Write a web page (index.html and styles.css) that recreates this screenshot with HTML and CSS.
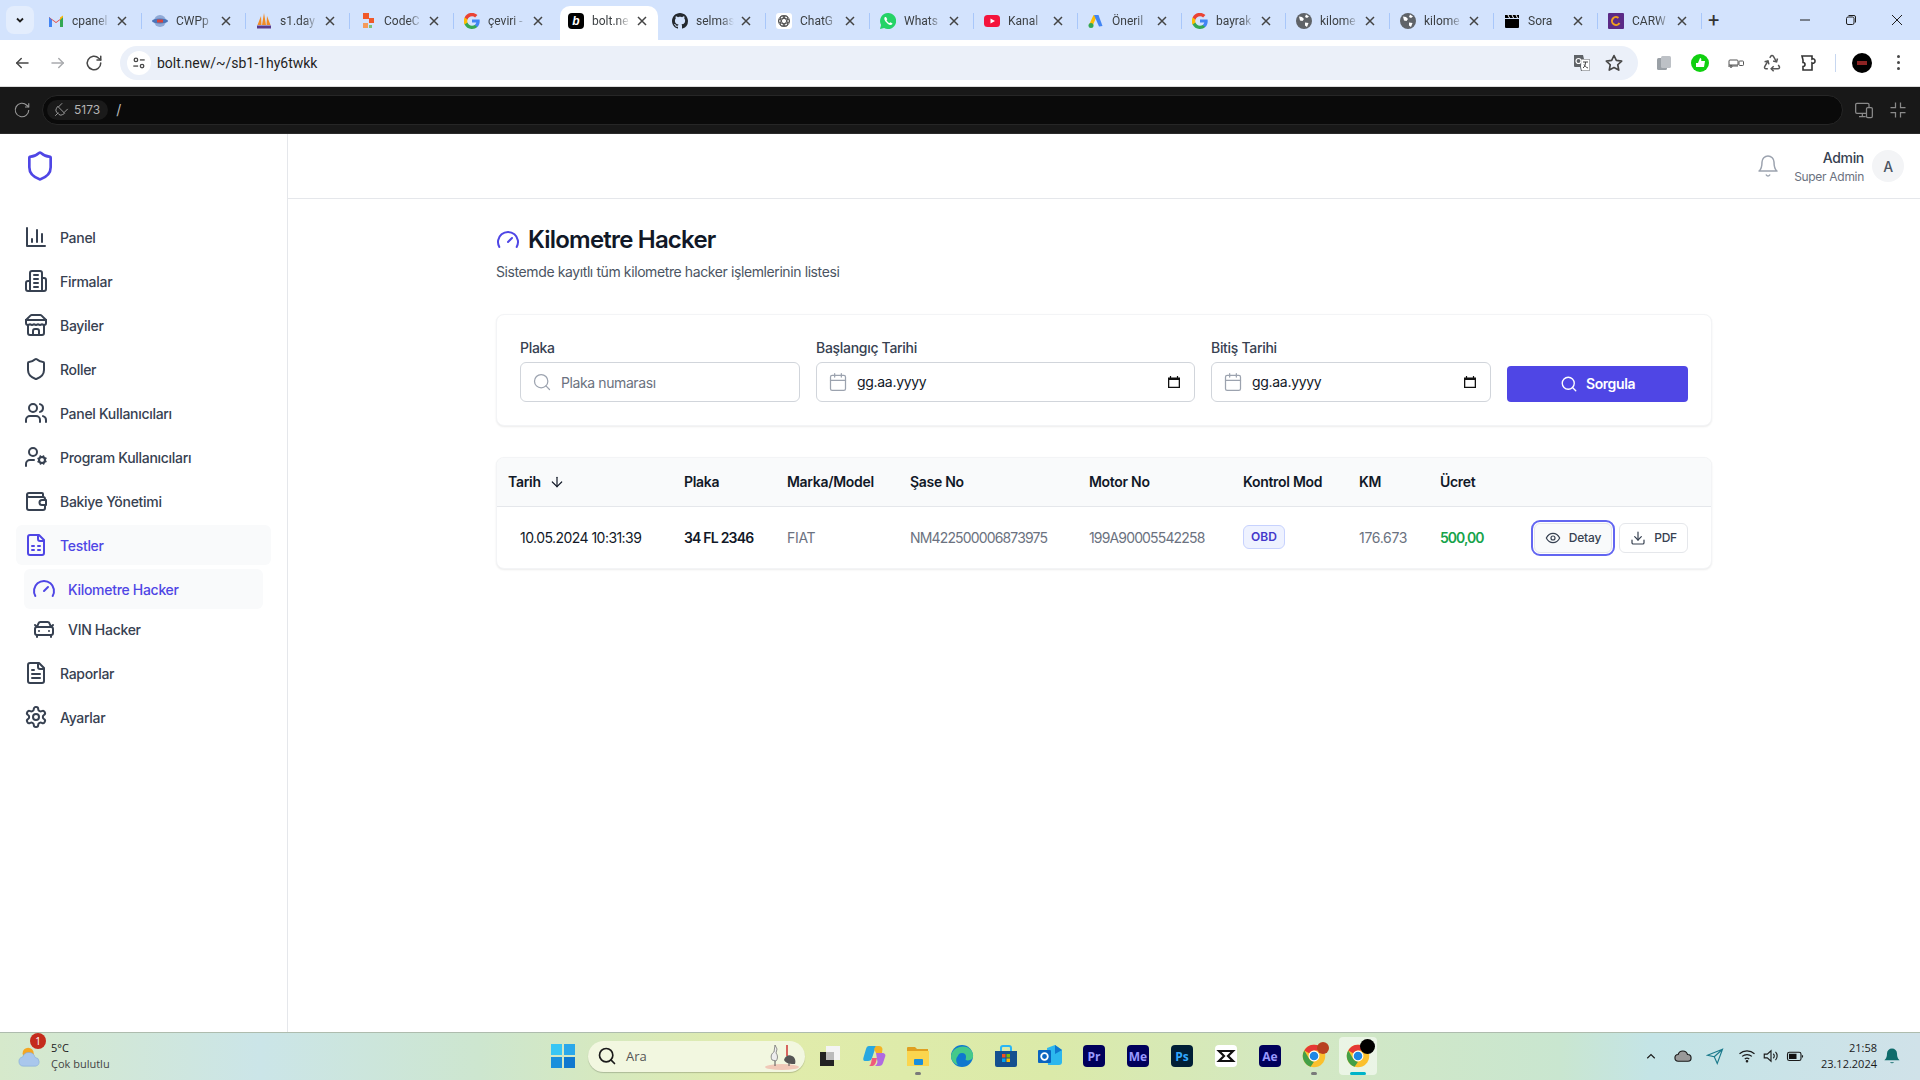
FILE: index.html
```html
<!DOCTYPE html>
<html lang="tr">
<head>
    <meta charset="UTF-8">
    <meta name="viewport" content="width=device-width, initial-scale=1.0">
    <title>Kilometre Hacker</title>
    <link rel="stylesheet" href="styles.css">
</head>
<body>
    <!-- icon sprite -->
    <svg class="sprite" xmlns="http://www.w3.org/2000/svg">
        <symbol id="i-chart" viewBox="0 0 24 24"><path d="M3 3v18h18"/><path d="M18 17V9"/><path d="M13 17V5"/><path d="M8 17v-3"/></symbol>
        <symbol id="i-building" viewBox="0 0 24 24"><path d="M6 22V4a2 2 0 0 1 2-2h8a2 2 0 0 1 2 2v18Z"/><path d="M6 12H4a2 2 0 0 0-2 2v6a2 2 0 0 0 2 2h2"/><path d="M18 9h2a2 2 0 0 1 2 2v9a2 2 0 0 1-2 2h-2"/><path d="M10 6h4"/><path d="M10 10h4"/><path d="M10 14h4"/><path d="M10 18h4"/></symbol>
        <symbol id="i-store" viewBox="0 0 24 24"><path d="m2 7 4.41-4.41A2 2 0 0 1 7.83 2h8.34a2 2 0 0 1 1.42.59L22 7"/><path d="M4 12v8a2 2 0 0 0 2 2h12a2 2 0 0 0 2-2v-8"/><path d="M15 22v-4a2 2 0 0 0-2-2h-2a2 2 0 0 0-2 2v4"/><path d="M2 7h20"/><path d="M22 7v3a2 2 0 0 1-2 2a2.7 2.7 0 0 1-1.59-.63.7.7 0 0 0-.82 0A2.7 2.7 0 0 1 16 12a2.7 2.7 0 0 1-1.59-.63.7.7 0 0 0-.82 0A2.7 2.7 0 0 1 12 12a2.7 2.7 0 0 1-1.59-.63.7.7 0 0 0-.82 0A2.7 2.7 0 0 1 8 12a2.7 2.7 0 0 1-1.59-.63.7.7 0 0 0-.82 0A2.7 2.7 0 0 1 4 12a2 2 0 0 1-2-2V7"/></symbol>
        <symbol id="i-shield" viewBox="0 0 24 24"><path d="M20 13c0 5-3.5 7.5-7.66 8.95a1 1 0 0 1-.67-.01C7.5 20.5 4 18 4 13V6a1 1 0 0 1 1-1c2 0 4.5-1.2 6.24-2.72a1.17 1.17 0 0 1 1.52 0C14.51 3.81 17 5 19 5a1 1 0 0 1 1 1z"/></symbol>
        <symbol id="i-users" viewBox="0 0 24 24"><path d="M16 21v-2a4 4 0 0 0-4-4H6a4 4 0 0 0-4 4v2"/><circle cx="9" cy="7" r="4"/><path d="M22 21v-2a4 4 0 0 0-3-3.87"/><path d="M16 3.13a4 4 0 0 1 0 7.75"/></symbol>
        <symbol id="i-usercog" viewBox="0 0 24 24"><circle cx="18" cy="15" r="3"/><circle cx="9" cy="7" r="4"/><path d="M10 15H6a4 4 0 0 0-4 4v2"/><path d="m21.7 16.4-.9-.3"/><path d="m15.2 13.9-.9-.3"/><path d="m16.6 18.7.3-.9"/><path d="m19.1 12.2.3-.9"/><path d="m19.6 18.7-.4-1"/><path d="m16.8 12.3-.4-1"/><path d="m14.3 16.6 1-.4"/><path d="m20.7 13.8 1-.4"/></symbol>
        <symbol id="i-wallet" viewBox="0 0 24 24"><path d="M19 8V5a1 1 0 0 0-1-1H5a2 2 0 0 0-2 2v13a2 2 0 0 0 2 2h14a2 2 0 0 0 2-2v-3"/><path d="M3 6a2 2 0 0 0 2 2h14a2 2 0 0 1 2 2v1"/><path d="M22 11h-4a2 2 0 0 0 0 5h4z"/></symbol>
        <symbol id="i-sheet" viewBox="0 0 24 24"><path d="M15 2H6a2 2 0 0 0-2 2v16a2 2 0 0 0 2 2h12a2 2 0 0 0 2-2V7Z"/><path d="M14 2v4a2 2 0 0 0 2 2h4"/><path d="M8 13h2"/><path d="M14 13h2"/><path d="M8 17h2"/><path d="M14 17h2"/></symbol>
        <symbol id="i-gauge" viewBox="0 0 24 24"><path d="m12 14 4-4"/><path d="M3.34 19a10 10 0 1 1 17.32 0"/></symbol>
        <symbol id="i-car" viewBox="0 0 24 24"><path d="m21 8-2 2-1.5-3.7A2 2 0 0 0 15.646 5H8.4a2 2 0 0 0-1.903 1.257L5 10 3 8"/><path d="M7 14h.01"/><path d="M17 14h.01"/><rect width="18" height="8" x="3" y="10" rx="2"/><path d="M5 18v2"/><path d="M19 18v2"/></symbol>
        <symbol id="i-file" viewBox="0 0 24 24"><path d="M15 2H6a2 2 0 0 0-2 2v16a2 2 0 0 0 2 2h12a2 2 0 0 0 2-2V7Z"/><path d="M14 2v4a2 2 0 0 0 2 2h4"/><path d="M10 9H8"/><path d="M16 13H8"/><path d="M16 17H8"/></symbol>
        <symbol id="i-gear" viewBox="0 0 24 24"><path d="M12.22 2h-.44a2 2 0 0 0-2 2v.18a2 2 0 0 1-1 1.73l-.43.25a2 2 0 0 1-2 0l-.15-.08a2 2 0 0 0-2.73.73l-.22.38a2 2 0 0 0 .73 2.73l.15.1a2 2 0 0 1 1 1.72v.51a2 2 0 0 1-1 1.74l-.15.09a2 2 0 0 0-.73 2.73l.22.38a2 2 0 0 0 2.73.73l.15-.08a2 2 0 0 1 2 0l.43.25a2 2 0 0 1 1 1.73V20a2 2 0 0 0 2 2h.44a2 2 0 0 0 2-2v-.18a2 2 0 0 1 1-1.73l.43-.25a2 2 0 0 1 2 0l.15.08a2 2 0 0 0 2.73-.73l.22-.39a2 2 0 0 0-.73-2.73l-.15-.08a2 2 0 0 1-1-1.74v-.5a2 2 0 0 1 1-1.74l.15-.09a2 2 0 0 0 .73-2.73l-.22-.38a2 2 0 0 0-2.73-.73l-.15.08a2 2 0 0 1-2 0l-.43-.25a2 2 0 0 1-1-1.73V4a2 2 0 0 0-2-2z"/><circle cx="12" cy="12" r="3"/></symbol>
        <symbol id="i-bell" viewBox="0 0 24 24"><path d="M6 8a6 6 0 0 1 12 0c0 7 3 9 3 9H3s3-2 3-9"/><path d="M10.3 21a1.94 1.94 0 0 0 3.4 0"/></symbol>
        <symbol id="i-search" viewBox="0 0 24 24"><circle cx="11" cy="11" r="8"/><path d="m21 21-4.3-4.3"/></symbol>
        <symbol id="i-calendar" viewBox="0 0 24 24"><path d="M8 2v4"/><path d="M16 2v4"/><rect width="18" height="18" x="3" y="4" rx="2"/><path d="M3 10h18"/></symbol>
        <symbol id="i-arrow" viewBox="0 0 24 24"><path d="M12 5v14"/><path d="m19 12-7 7-7-7"/></symbol>
        <symbol id="i-eye" viewBox="0 0 24 24"><path d="M2 12s3.5-7 10-7 10 7 10 7-3.5 7-10 7-10-7-10-7Z"/><circle cx="12" cy="12" r="3"/></symbol>
        <symbol id="i-download" viewBox="0 0 24 24"><path d="M21 15v4a2 2 0 0 1-2 2H5a2 2 0 0 1-2-2v-4"/><path d="m7 10 5 5 5-5"/><path d="M12 15V3"/></symbol>
        <symbol id="i-reload" viewBox="0 0 24 24"><path d="M21 12a9 9 0 1 1-2.64-6.36L21 8"/><path d="M21 3v5h-5"/></symbol>
        <symbol id="i-close" viewBox="0 0 10 10"><path d="M1 1l8 8M9 1 1 9"/></symbol>
        <symbol id="f-globe" viewBox="0 0 16 16"><circle cx="8" cy="8" r="8" fill="#5f6368"/><path d="M3 3.5l3 .5 2 2-1.5 2L4 7.5zM9 9.5l3.500.5-1.500 4-2-1.500zM10 1.500l3 2-2 1.500-2-1z" fill="#fff"/></symbol>
        <symbol id="f-google" viewBox="0 0 16 16"><path d="M15.700 8.200c0-.6-.05-1.100-.15-1.600H8v3h4.300a3.700 3.700 0 0 1-1.600 2.400v2h2.600c1.500-1.400 2.400-3.400 2.400-5.800z" fill="#4285f4"/><path d="M8 16c2.200 0 4-.7 5.300-2l-2.600-2c-.7.5-1.600.8-2.700.8-2.100 0-3.900-1.400-4.500-3.300H.6v2.100A8 8 0 0 0 8 16z" fill="#34a853"/><path d="M3.500 9.500a4.800 4.800 0 0 1 0-3V4.400H.6a8 8 0 0 0 0 7.200z" fill="#fbbc05"/><path d="M8 3.200c1.200 0 2.300.4 3.100 1.200l2.300-2.300A8 8 0 0 0 .6 4.400l2.900 2.100C4.100 4.600 5.900 3.200 8 3.200z" fill="#ea4335"/></symbol>
        <symbol id="f-chrome" viewBox="0 0 32 32"><circle cx="16" cy="16" r="15" fill="#fbc02d"/><path d="M16 1a15 15 0 0 1 13 7.500H16a7.500 7.500 0 0 0-6.500 3.750L3 8.500A15 15 0 0 1 16 1z" fill="#e53935"/><path d="M3 8.500l6.500 11.250A7.500 7.500 0 0 0 16 23.500l-4.500 6.800A15 15 0 0 1 3 8.500z" fill="#43a047"/><circle cx="16" cy="16" r="6.500" fill="#1e88e5" stroke="#fff" stroke-width="1.500"/></symbol>
    </svg>

    <!-- browser tabs -->
    <div class="tabstrip">
        <button class="tab-menu"><svg viewBox="0 0 12 12"><path d="M3 4.500 6 7.500 9 4.500"/></svg></button>
        <div class="tab"><svg class="favicon" viewBox="0 0 16 16"><path d="M1 14V4l7 5 7-5v10h-3V7L8 10 4 7v7z" fill="#ea4335"/><path d="M1 14h3V7L1 4z" fill="#4285f4"/><path d="M12 14h3V4l-3 3z" fill="#34a853"/><path d="M12 7l3-3V2.500L12 4.500z" fill="#fbbc05"/></svg><span class="tab-title">cpanel</span><svg class="tab-close"><use href="#i-close"/></svg></div>
        <div class="tab"><svg class="favicon" viewBox="0 0 16 16"><circle cx="8" cy="8" r="6" fill="#8fa9d6"/><ellipse cx="8" cy="8" rx="8" ry="2.500" fill="#4a74b8"/><rect x="5" y="6.500" width="6" height="3" fill="#d8443c"/></svg><span class="tab-title">CWPp</span><svg class="tab-close"><use href="#i-close"/></svg></div>
        <div class="tab"><svg class="favicon" viewBox="0 0 16 16"><path d="M8 0 10 12H6zM5 3 5.500 12H1.500zM11 3 14.500 12H10.500z" fill="#f08a24"/><rect x="1" y="12.500" width="14" height="3" fill="#5a3a8a"/></svg><span class="tab-title">s1.day</span><svg class="tab-close"><use href="#i-close"/></svg></div>
        <div class="tab"><svg class="favicon" viewBox="0 0 16 16"><rect x="3" y="0" width="6" height="6" fill="#f0592a"/><rect x="9" y="5" width="5" height="5" fill="#f0592a"/><rect x="3" y="10" width="5" height="5" fill="#f59a5a"/><rect x="9" y="12" width="3" height="3" fill="#7cc576"/></svg><span class="tab-title">CodeC</span><svg class="tab-close"><use href="#i-close"/></svg></div>
        <div class="tab"><svg class="favicon"><use href="#f-google"/></svg><span class="tab-title">çeviri -</span><svg class="tab-close"><use href="#i-close"/></svg></div>
        <div class="tab tab-active"><span class="favicon bolt-icon">b</span><span class="tab-title">bolt.ne</span><svg class="tab-close"><use href="#i-close"/></svg></div>
        <div class="tab"><svg class="favicon" viewBox="0 0 16 16"><path fill="#24292f" d="M8 0C3.580 0 0 3.580 0 8c0 3.540 2.290 6.530 5.470 7.590.4.070.55-.17.55-.38 0-.19-.01-.82-.01-1.490-2.010.37-2.530-.49-2.690-.94-.09-.23-.48-.94-.82-1.130-.28-.15-.68-.52-.01-.53.63-.01 1.080.58 1.230.82.72 1.210 1.870.87 2.330.66.070-.52.28-.87.51-1.070-1.780-.2-3.640-.89-3.640-3.950 0-.87.31-1.590.82-2.150-.08-.2-.36-1.020.08-2.120 0 0 .67-.21 2.200.82.64-.18 1.320-.27 2-.27s1.360.09 2 .27c1.530-1.040 2.200-.82 2.200-.82.44 1.100.16 1.920.08 2.120.51.56.82 1.270.82 2.150 0 3.070-1.870 3.750-3.650 3.950.29.25.54.73.54 1.480 0 1.070-.01 1.930-.01 2.200 0 .21.15.46.55.38A8.010 8.010 0 0 0 16 8c0-4.420-3.580-8-8-8z"/></svg><span class="tab-title">selmas</span><svg class="tab-close"><use href="#i-close"/></svg></div>
        <div class="tab"><svg class="favicon" viewBox="0 0 16 16"><rect width="16" height="16" rx="3" fill="#fff"/><g fill="none" stroke="#555" stroke-width="1"><circle cx="8" cy="8" r="5.500"/><ellipse cx="8" cy="8" rx="5.500" ry="2.500" transform="rotate(60 8 8)"/><ellipse cx="8" cy="8" rx="5.500" ry="2.500" transform="rotate(-60 8 8)"/><ellipse cx="8" cy="8" rx="5.500" ry="2.500"/></g></svg><span class="tab-title">ChatG</span><svg class="tab-close"><use href="#i-close"/></svg></div>
        <div class="tab"><svg class="favicon" viewBox="0 0 16 16"><path d="M8 0a8 8 0 0 0-6.900 12L0 16l4.100-1.100A8 8 0 1 0 8 0z" fill="#25d366"/><path d="M5 4c-1 1-1 2.500.5 4.500S9 11.800 10.500 12c1 .1 2-.8 2-1.500l-2-1.200-1 .8C8.500 9.800 7 8.300 6.500 7.300l.8-1L6 4z" fill="#fff"/></svg><span class="tab-title">Whats</span><svg class="tab-close"><use href="#i-close"/></svg></div>
        <div class="tab"><svg class="favicon" viewBox="0 0 16 16"><rect y="2" width="16" height="12" rx="3.500" fill="#f4143c"/><path d="M6.500 5.500v5L11 8z" fill="#fff"/></svg><span class="tab-title">Kanal</span><svg class="tab-close"><use href="#i-close"/></svg></div>
        <div class="tab"><svg class="favicon" viewBox="0 0 16 16"><path d="M5.500 2 1 12l3 2 4.500-10z" fill="#fbbc05"/><path d="M10.500 2H6l5 11.500 3.500-.5z" fill="#4285f4"/><circle cx="3" cy="12.500" r="2.500" fill="#34a853"/></svg><span class="tab-title">Öneril</span><svg class="tab-close"><use href="#i-close"/></svg></div>
        <div class="tab"><svg class="favicon"><use href="#f-google"/></svg><span class="tab-title">bayrak</span><svg class="tab-close"><use href="#i-close"/></svg></div>
        <div class="tab"><svg class="favicon"><use href="#f-globe"/></svg><span class="tab-title">kilome</span><svg class="tab-close"><use href="#i-close"/></svg></div>
        <div class="tab"><svg class="favicon"><use href="#f-globe"/></svg><span class="tab-title">kilome</span><svg class="tab-close"><use href="#i-close"/></svg></div>
        <div class="tab"><svg class="favicon" viewBox="0 0 16 16"><path d="M1 6h14v8a1 1 0 0 1-1 1H2a1 1 0 0 1-1-1z"/><path d="M1 2h14v3H1z"/><path d="M4 2 5.500 5M8 2 9.500 5M12 2 13.500 5" stroke="#fff" stroke-width="1"/></svg><span class="tab-title">Sora</span><svg class="tab-close"><use href="#i-close"/></svg></div>
        <div class="tab"><svg class="favicon" viewBox="0 0 16 16"><rect width="16" height="16" rx="1" fill="#5b2a86"/><circle cx="8" cy="8" r="4" fill="none" stroke="#f0a020" stroke-width="2" stroke-dasharray="19 6" transform="rotate(30 8 8)"/></svg><span class="tab-title">CARW</span><svg class="tab-close"><use href="#i-close"/></svg></div>
        <span class="tab-new">+</span>
        <div class="win-controls">
            <svg viewBox="0 0 12 12"><path d="M1 6h10"/></svg>
            <svg viewBox="0 0 12 12"><rect x="1.500" y="3" width="7.500" height="7.500" rx="1.500"/><path d="M3.500 1.500H9A1.500 1.500 0 0 1 10.500 3v5.500"/></svg>
            <svg viewBox="0 0 12 12"><path d="M1 1l10 10M11 1 1 11"/></svg>
        </div>
    </div>

    <!-- browser toolbar -->
    <div class="toolbar">
        <button class="tool-btn"><svg viewBox="0 0 24 24"><path d="M20 12H5"/><path d="m11 6-6 6 6 6"/></svg></button>
        <button class="tool-btn tool-off"><svg viewBox="0 0 24 24"><path d="M4 12h15"/><path d="m13 6 6 6-6 6"/></svg></button>
        <button class="tool-btn"><svg viewBox="0 0 24 24"><use href="#i-reload"/></svg></button>
        <div class="address">
            <span class="site-chip"><svg viewBox="0 0 16 16"><circle cx="4.500" cy="4.500" r="2"/><path d="M9 4.500h5.500"/><circle cx="11.500" cy="11.500" r="2"/><path d="M1.500 11.500H7"/></svg></span>
            <span class="address-text">bolt.new/~/sb1-1hy6twkk</span>
            <svg class="translate-icon" viewBox="0 0 20 20"><path d="M2 2h9l1 4h5a1 1 0 0 1 1 1v10a1 1 0 0 1-1 1H9l-1-4H3a1 1 0 0 1-1-1z" fill="#5f6368"/><path d="M9.500 6.500H17.500V17.500H9.800L9 14z" fill="#fff"/><path d="M11 9h5M13.500 9c0 3-1 5-2.500 6M12 11.500c.8 1.500 2.200 3 4 3.500" fill="none" stroke="#444" stroke-width="1"/><circle cx="6.500" cy="8" r="2.500" fill="none" stroke="#fff" stroke-width="1.200"/></svg>
            <svg class="star-icon" viewBox="0 0 24 24"><path d="M12 3l2.800 5.900 6.400.8-4.700 4.400 1.200 6.400L12 17.400l-5.700 3.100 1.200-6.400L2.800 9.700l6.400-.8z"/></svg>
        </div>
        <div class="extensions">
            <span class="ext"><svg viewBox="0 0 20 20"><rect x="3" y="5" width="10" height="12" rx="1.500" fill="#9aa0a6"/><rect x="7" y="3" width="10" height="12" rx="1.500" fill="#bdc1c6"/></svg></span>
            <span class="ext"><svg viewBox="0 0 20 20"><circle cx="10" cy="10" r="9" fill="#10d010"/><path d="M6 10h2l2-5c1.500 0 1.500 1.500 1.200 3H15l-1 6H6z" fill="#fff"/></svg></span>
            <span class="ext"><svg viewBox="0 0 20 20" class="ext-line ext-thin"><path d="M3 12V8a1 1 0 0 1 1-1h7a1 1 0 0 1 1 1v4H3z"/><rect x="13" y="8" width="4.500" height="4.500" rx=".8"/><path d="M2 13h10"/><circle cx="5" cy="13.500" r="1"/></svg></span>
            <span class="ext"><svg viewBox="0 0 24 24" class="ext-line"><path d="M7 19H4.815a1.830 1.830 0 0 1-1.570-.881 1.785 1.785 0 0 1-.004-1.784L7.196 9.500"/><path d="M11 19h8.203a1.830 1.830 0 0 0 1.556-.89 1.784 1.784 0 0 0 0-1.775l-1.226-2.120"/><path d="m14 16-3 3 3 3"/><path d="M8.293 13.596 7.196 9.500 3.100 10.598"/><path d="m9.344 5.811 1.093-1.892A1.830 1.830 0 0 1 11.985 3a1.784 1.784 0 0 1 1.546.888l3.943 6.843"/><path d="m13.378 9.633 4.096 1.098 1.097-4.096"/></svg></span>
            <span class="ext"><svg viewBox="0 0 20 20" class="ext-dark"><path d="M3 3h10v3a2 2 0 0 1 3 2 2 2 0 0 1-3 2v7H4v-3.500a2 2 0 0 0 0-4V7z"/></svg></span>
            <span class="tool-sep"></span>
            <span class="profile"><span class="profile-logo"></span></span>
            <span class="dots"><i></i><i></i><i></i></span>
        </div>
    </div>

    <!-- bolt preview bar -->
    <div class="devbar">
        <svg class="dev-reload" viewBox="0 0 24 24"><use href="#i-reload"/></svg>
        <div class="dev-field">
            <span class="port"><svg viewBox="0 0 24 24"><path d="M2 22l5-5"/><path d="M9 9l6-6" transform="translate(-2 -1)"/><path d="M15 15l6-6" transform="translate(1 2)"/><path d="M6 7l11 11-3 2a5 5 0 0 1-6 0l-4-4a5 5 0 0 1 0-6z"/></svg>5173</span>
            <span class="dev-path">/</span>
        </div>
        <svg class="dev-icon" viewBox="0 0 24 24"><rect x="2" y="4" width="16" height="12" rx="1.500"/><path d="M6 20h8M10 16v4"/><rect x="15" y="9" width="7" height="12" rx="1.500" fill="#181818"/></svg>
        <svg class="dev-icon" viewBox="0 0 24 24"><path d="M9 3v6H3"/><path d="M15 3v6h6"/><path d="M9 21v-6H3"/><path d="M15 21v-6h6"/></svg>
    </div>

    <!-- app -->
    <div class="app">
        <aside class="sidebar">
            <div class="logo"><svg class="logo-icon icon"><use href="#i-shield"/></svg></div>
            <nav class="nav">
                <a class="nav-item"><svg class="icon"><use href="#i-chart"/></svg>Panel</a>
                <a class="nav-item"><svg class="icon"><use href="#i-building"/></svg>Firmalar</a>
                <a class="nav-item"><svg class="icon"><use href="#i-store"/></svg>Bayiler</a>
                <a class="nav-item"><svg class="icon"><use href="#i-shield"/></svg>Roller</a>
                <a class="nav-item"><svg class="icon"><use href="#i-users"/></svg>Panel Kullanıcıları</a>
                <a class="nav-item"><svg class="icon"><use href="#i-usercog"/></svg>Program Kullanıcıları</a>
                <a class="nav-item"><svg class="icon"><use href="#i-wallet"/></svg>Bakiye Yönetimi</a>
                <a class="nav-item active"><svg class="icon"><use href="#i-sheet"/></svg>Testler</a>
                <div class="subnav">
                    <a class="nav-item active"><svg class="icon"><use href="#i-gauge"/></svg>Kilometre Hacker</a>
                    <a class="nav-item"><svg class="icon"><use href="#i-car"/></svg>VIN Hacker</a>
                </div>
                <a class="nav-item"><svg class="icon"><use href="#i-file"/></svg>Raporlar</a>
                <a class="nav-item"><svg class="icon"><use href="#i-gear"/></svg>Ayarlar</a>
            </nav>
        </aside>
        <div class="content">
            <header class="topbar">
                <svg class="bell icon"><use href="#i-bell"/></svg>
                <div class="user">
                    <div class="user-name">Admin</div>
                    <div class="user-role">Super Admin</div>
                </div>
                <div class="avatar">A</div>
            </header>
            <main class="main">
                <h1 class="page-title"><svg class="icon"><use href="#i-gauge"/></svg>Kilometre Hacker</h1>
                <p class="page-sub">Sistemde kayıtlı tüm kilometre hacker işlemlerinin listesi</p>

                <form class="filter card">
                    <div class="field field-plate">
                        <label for="plaka">Plaka</label>
                        <div class="input-box">
                            <svg class="icon"><use href="#i-search"/></svg>
                            <input id="plaka" type="text" placeholder="Plaka numarası">
                        </div>
                    </div>
                    <div class="field field-start">
                        <label>Başlangıç Tarihi</label>
                        <div class="input-box">
                            <svg class="icon"><use href="#i-calendar"/></svg>
                            <span class="date-value">gg.aa.yyyy</span>
                            <svg class="picker" viewBox="0 0 12 12"><path d="M2.500 0v2M9.500 0v2" stroke="#111" stroke-width="1.200"/><path d="M0 1.500h12V12H0zM1.300 4v6.700h9.400V4z" fill="#111" fill-rule="evenodd"/></svg>
                        </div>
                    </div>
                    <div class="field field-plate">
                        <label>Bitiş Tarihi</label>
                        <div class="input-box">
                            <svg class="icon"><use href="#i-calendar"/></svg>
                            <span class="date-value">gg.aa.yyyy</span>
                            <svg class="picker" viewBox="0 0 12 12"><path d="M2.500 0v2M9.500 0v2" stroke="#111" stroke-width="1.200"/><path d="M0 1.500h12V12H0zM1.300 4v6.700h9.400V4z" fill="#111" fill-rule="evenodd"/></svg>
                        </div>
                    </div>
                    <button class="query-btn" type="button"><svg class="icon"><use href="#i-search"/></svg>Sorgula</button>
                </form>

                <div class="table-card card">
                    <table class="results">
                        <colgroup>
                            <col class="c-date"><col class="c-plate"><col class="c-brand"><col class="c-chassis"><col class="c-motor"><col class="c-mode"><col class="c-km"><col class="c-fee"><col>
                        </colgroup>
                        <thead>
                            <tr>
                                <th class="th-date"><span class="sort">Tarih <svg class="icon"><use href="#i-arrow"/></svg></span></th>
                                <th>Plaka</th>
                                <th>Marka/Model</th>
                                <th>Şase No</th>
                                <th>Motor No</th>
                                <th>Kontrol Mod</th>
                                <th>KM</th>
                                <th>Ücret</th>
                                <th></th>
                            </tr>
                        </thead>
                        <tbody>
                            <tr>
                                <td class="cell-date">10.05.2024 10:31:39</td>
                                <td class="cell-plate">34 FL 2346</td>
                                <td>FIAT</td>
                                <td class="cell-code">NM422500006873975</td>
                                <td class="cell-code">199A90005542258</td>
                                <td><span class="badge">OBD</span></td>
                                <td>176.673</td>
                                <td class="cell-fee">500,00</td>
                                <td>
                                    <div class="row-actions">
                                        <button class="row-btn row-btn-focus" type="button"><svg class="icon"><use href="#i-eye"/></svg>Detay</button>
                                        <button class="row-btn" type="button"><svg class="icon"><use href="#i-download"/></svg>PDF</button>
                                    </div>
                                </td>
                            </tr>
                        </tbody>
                    </table>
                </div>
            </main>
        </div>
    </div>

    <!-- windows taskbar -->
    <div class="taskbar">
        <div class="weather">
            <svg class="weather-icon" viewBox="0 0 26 26"><circle cx="11" cy="10" r="6" fill="#f5a623"/><path d="M6 24a5 5 0 0 1-1-9.900 7 7 0 0 1 13.500.4A4.800 4.800 0 0 1 19 24z" fill="#a9c7ec" stroke="#7fa8d8" stroke-width=".6"/></svg>
            <span class="weather-badge">1</span>
            <div class="weather-text">
                <div class="weather-temp">5°C</div>
                <div class="weather-desc">Çok bulutlu</div>
            </div>
        </div>
        <div class="task-icon"><svg viewBox="0 0 24 24"><rect y="0" width="11" height="11" fill="#38c6f4"/><rect x="13" y="0" width="11" height="11" fill="#2aa8ea"/><rect y="13" width="11" height="11" fill="#1a8fdc"/><rect x="13" y="13" width="11" height="11" fill="#0f78cf"/></svg></div>
        <div class="search-pill">
            <svg class="icon"><use href="#i-search"/></svg>
            <span>Ara</span>
            <svg class="cranes" viewBox="0 0 36 28"><ellipse cx="18" cy="25" rx="17" ry="3" fill="#f0c9b8"/><path d="M11 24V14" stroke="#555" stroke-width="1"/><path d="M8 18c-2-4 0-7 2-8l1-7 2 4-1 4c2 2 2 6 0 8z" fill="#eee" stroke="#666" stroke-width=".7"/><path d="M25 24V16" stroke="#555" stroke-width="1"/><path d="M20 18c1-4 5-6 8-4 3 1 4 5 3 8-4 0-9 0-11-4z" fill="#555"/><path d="M23 14V3" stroke="#c33" stroke-width="1.500"/></svg>
        </div>
        <div class="task-icon"><svg viewBox="0 0 24 24"><rect x="8" y="2" width="14" height="14" fill="#f4f4f4"/><rect x="2" y="8" width="14" height="14" fill="#222"/><rect x="8" y="8" width="8" height="8" fill="#bbb"/></svg></div>
        <div class="task-icon"><svg viewBox="0 0 24 24"><path d="M7 2h7l-4 12c-.5 2-2 3-4 3H3C1 17 1 15 1.500 13.500L4 5c.5-2 1.500-3 3-3z" fill="#28a8e0"/><path d="M14 2h3c2 0 3 1 3.500 3L20 9h-6l-2-4z" fill="#f4b323"/><path d="M10 14h5l-1 4c-.5 2-2 4-4 4H7c2-1 2-3 3-8z" fill="#f05a7a"/><path d="M14 9h6c3 0 4 2 3 4l-2 6c-.5 2-2 3-4 3h-5c2 0 3-2 3.500-4z" fill="#b06ae0"/></svg></div>
        <div class="task-icon has-dot"><svg viewBox="0 0 24 24"><path d="M1 4a1 1 0 0 1 1-1h7l2 2h11v3H1z" fill="#e0a020"/><path d="M1 7h22v15H1z" fill="#fbd54e"/><rect x="8" y="15" width="9" height="6" rx="1" fill="#1a8fdc"/></svg></div>
        <div class="task-icon"><svg viewBox="0 0 24 24"><circle cx="12" cy="12" r="11" fill="#0f78cf"/><path d="M1 12C2 3 15-1 21 6c3 4 3 9-1 10-3 1-6 0-5-3 1-2-2-4-6-2-3 2-4 6-1 10-4-1-7-5-7-9z" fill="#45c98a"/><circle cx="12" cy="13" r="4" fill="#0f78cf"/></svg></div>
        <div class="task-icon"><svg viewBox="0 0 24 24"><path d="M1 7h22v14a2 2 0 0 1-2 2H3a2 2 0 0 1-2-2z" fill="#14508f"/><path d="M7 7V4a2 2 0 0 1 2-2h6a2 2 0 0 1 2 2v3" fill="none" stroke="#29b6f6" stroke-width="2"/><rect x="8" y="10" width="3.500" height="3.500" fill="#f25022"/><rect x="12.500" y="10" width="3.500" height="3.500" fill="#7fba00"/><rect x="8" y="14.500" width="3.500" height="3.500" fill="#00a4ef"/><rect x="12.500" y="14.500" width="3.500" height="3.500" fill="#ffb900"/></svg></div>
        <div class="task-icon"><svg viewBox="0 0 24 24"><path d="M9 4l8-3 7 5v12a3 3 0 0 1-3 3H10z" fill="#2cb7ee"/><path d="M17 1l7 5-7 4z" fill="#0f78cf"/><rect x="0" y="6" width="13" height="13" rx="1" fill="#0a64c0"/><circle cx="6.500" cy="12.500" r="3.300" fill="none" stroke="#fff" stroke-width="1.800"/></svg></div>
        <div class="task-icon"><span class="app-tile tile-adobe">Pr</span></div>
        <div class="task-icon"><span class="app-tile tile-adobe">Me</span></div>
        <div class="task-icon"><span class="app-tile tile-ps">Ps</span></div>
        <div class="task-icon"><svg viewBox="0 0 24 24"><rect x="1" y="1" width="22" height="22" rx="4" fill="#fff"/><path d="M5 7l14 0-5 5 5 5H5l5-5z" fill="none" stroke="#111" stroke-width="2.200"/></svg></div>
        <div class="task-icon"><span class="app-tile tile-adobe">Ae</span></div>
        <div class="task-icon has-dot"><svg class="chrome"><use href="#f-chrome"/></svg><span class="chrome-s"></span></div>
        <div class="task-icon task-active"><svg class="chrome"><use href="#f-chrome"/></svg><span class="chrome-p"></span></div>
        <div class="tray">
            <svg class="tray-icon" viewBox="0 0 24 24"><path d="m7 15 5-5 5 5"/></svg>
            <svg class="tray-icon" viewBox="0 0 24 24"><path d="M6 19a4.500 4.500 0 0 1-.5-9A6.500 6.500 0 0 1 18 10a4.500 4.500 0 0 1 .5 9z" fill="#999"/></svg>
            <svg class="tray-icon tray-send" viewBox="0 0 24 24"><path d="M22 3 2 11l9 2 4 9zM11 13 22 3"/></svg>
            <div class="tray-group">
                <svg class="tray-icon" viewBox="0 0 24 24"><path d="M2 9a15 15 0 0 1 20 0M5.500 12.500a10 10 0 0 1 13 0M9 16a5 5 0 0 1 6 0"/><circle cx="12" cy="19" r="1" fill="#111"/></svg>
                <svg class="tray-icon" viewBox="0 0 24 24"><path d="M3 9.500v5h4l5 4.500V5L7 9.500z"/><path d="M15 9a4 4 0 0 1 0 6M18 6.500a8 8 0 0 1 0 11"/></svg>
                <svg class="tray-icon" viewBox="0 0 24 24"><rect x="2" y="7" width="18" height="11" rx="2.500"/><rect x="4" y="9" width="10" height="7" fill="#111" stroke="none"/><path d="M22 11v3"/></svg>
            </div>
            <div class="clock">
                <div>21:58</div>
                <div>23.12.2024</div>
            </div>
            <svg class="tray-bell" viewBox="0 0 24 24"><path d="M6 9a6 6 0 0 1 12 0c0 6 3 8 3 8H3s3-2 3-8"/><path d="M9.500 19.500a3 2.500 0 0 0 5 0z"/></svg>
        </div>
    </div>
</body>
</html>
```

FILE: styles.css
```css
* {
    box-sizing: border-box;
}
html, body {
    margin: 0;
    height: 100%;
    overflow: hidden;
}
body {
    width: 1920px;
    height: 1080px;
    display: flex;
    flex-direction: column;
    font-family: Inter, "Liberation Sans", sans-serif;
    background: #fff;
    color: #111827;
}
button {
    font-family: inherit;
    border: none;
    background: none;
    padding: 0;
}
.sprite {
    display: none;
}
.icon {
    width: 24px;
    height: 24px;
    flex: none;
    fill: none;
    stroke: currentColor;
    stroke-width: 2;
    stroke-linecap: round;
    stroke-linejoin: round;
}

/* browser tabs */
.tabstrip {
    height: 40px;
    flex: none;
    display: flex;
    align-items: flex-end;
    background: #d3e3fd;
    padding-left: 6px;
    font-family: Roboto, "Liberation Sans", sans-serif;
    font-size: 12px;
    color: #3c4043;
}
.tab-menu {
    width: 28px;
    height: 28px;
    margin: 0 4px 6px 0;
    border-radius: 8px;
    background: #e3edfd;
    display: flex;
    align-items: center;
    justify-content: center;
}
.tab-menu svg {
    width: 12px;
    height: 12px;
    fill: none;
    stroke: #1f1f1f;
    stroke-width: 1.800;
}
.tab {
    position: relative;
    width: 104px;
    height: 34px;
    flex: none;
    display: flex;
    align-items: center;
    padding: 0 12px 4px 10px;
}
.tab::after {
    content: "";
    position: absolute;
    right: 0;
    top: 7px;
    height: 16px;
    width: 1.500px;
    background: #a8c7fa;
}
.tab:nth-child(6)::after,
.tab-active::after {
    display: none;
}
.tab-active {
    background: #fff;
    border-radius: 10px 10px 0 0;
    margin: 0 4px 0 2px;
    width: 98px;
    padding-left: 8px;
    padding-right: 8px;
}
.favicon {
    width: 16px;
    height: 16px;
    flex: none;
}
.bolt-icon {
    background: #000;
    color: #fff;
    border-radius: 4px;
    font: italic 700 12px/16px "Liberation Sans", sans-serif;
    text-align: center;
}
.tab-title {
    flex: 1;
    margin: 0 4px 0 8px;
    min-width: 0;
    white-space: nowrap;
    overflow: hidden;
    -webkit-mask-image: linear-gradient(90deg, #000 65%, transparent 100%);
    mask-image: linear-gradient(90deg, #000 65%, transparent 100%);
}
.tab-close {
    width: 16px;
    height: 10px;
    flex: none;
    fill: none;
    stroke: #444;
    stroke-width: 1.500;
}
.tab-new {
    margin: 0 0 8px 6px;
    font-size: 20px;
    line-height: 24px;
    color: #333;
}
.win-controls {
    margin-left: auto;
    align-self: stretch;
    display: flex;
    align-items: center;
    gap: 34px;
    padding-right: 17px;
}
.win-controls svg {
    width: 12px;
    height: 12px;
    fill: none;
    stroke: #1f1f1f;
    stroke-width: 1;
}

/* browser toolbar */
.toolbar {
    height: 47px;
    flex: none;
    display: flex;
    align-items: center;
    padding: 0 4px 1px;
    background: #fff;
    border-bottom: 1px solid #dcdcdc;
    border-radius: 8px 8px 0 0;
}
.tool-btn {
    width: 36px;
    height: 36px;
    display: flex;
    align-items: center;
    justify-content: center;
}
.tool-btn svg {
    width: 18px;
    height: 18px;
    fill: none;
    stroke: #474747;
    stroke-width: 2;
    stroke-linecap: round;
    stroke-linejoin: round;
}
.tool-off svg {
    stroke: #a9abae;
}
.address {
    width: 1518px;
    height: 34px;
    margin-left: 8px;
    border-radius: 17px;
    background: #ebf0f9;
    display: flex;
    align-items: center;
    padding-left: 7px;
    padding-right: 14px;
    font-family: Roboto, "Liberation Sans", sans-serif;
    font-size: 14px;
    color: #1f1f1f;
}
.site-chip {
    width: 24px;
    height: 24px;
    border-radius: 50%;
    background: #fff;
    display: flex;
    align-items: center;
    justify-content: center;
}
.site-chip svg {
    width: 14px;
    height: 14px;
    fill: none;
    stroke: #474747;
    stroke-width: 1.500;
}
.address-text {
    margin-left: 6px;
    flex: 1;
}
.translate-icon {
    width: 20px;
    height: 20px;
}
.star-icon {
    width: 20px;
    height: 20px;
    margin-left: 12px;
    fill: none;
    stroke: #474747;
    stroke-width: 2;
    stroke-linejoin: round;
}
.extensions {
    display: flex;
    align-items: center;
    margin-left: 8px;
}
.ext {
    width: 36px;
    height: 36px;
    display: flex;
    align-items: center;
    justify-content: center;
}
.ext svg {
    width: 20px;
    height: 20px;
}
.ext-line {
    fill: none;
    stroke: #555;
    stroke-width: 1.800;
}
.ext-thin {
    stroke-width: 1;
}
.ext-dark {
    fill: none;
    stroke: #333;
    stroke-width: 1.600;
    margin-left: 1px;
}
.tool-sep {
    width: 1px;
    height: 18px;
    margin: 0 8px 0 9px;
    background: #c7d7f0;
}
.profile {
    width: 20px;
    height: 20px;
    margin: 0 8px;
    border-radius: 50%;
    background: #000;
    display: flex;
    align-items: center;
    justify-content: center;
}
.profile-logo {
    width: 10px;
    height: 4px;
    background: #8c2323;
}
.dots {
    width: 36px;
    display: flex;
    flex-direction: column;
    align-items: center;
    gap: 3px;
}
.dots i {
    width: 3px;
    height: 3px;
    border-radius: 50%;
    background: #474747;
}

/* bolt preview bar */
.devbar {
    height: 47px;
    flex: none;
    display: flex;
    align-items: center;
    padding-bottom: 1px;
    background: #181818;
    border-bottom: 1px solid #2a2a2a;
    color: #a0a0a0;
}
.dev-reload {
    width: 18px;
    height: 18px;
    margin: 0 11px 0 13px;
    fill: none;
    stroke: #9a9a9a;
    stroke-width: 1.500;
}
.dev-field {
    width: 1801px;
    height: 30px;
    border-radius: 15px;
    background: #0a0a0a;
    border: 1px solid #262626;
    display: flex;
    align-items: center;
    padding-left: 4px;
    font-size: 12px;
}
.port {
    height: 20px;
    padding: 0 8px 0 7px;
    border-radius: 10px;
    background: #1a1a1a;
    display: flex;
    align-items: center;
    gap: 5px;
    color: #b4b4b4;
}
.port svg {
    width: 15px;
    height: 15px;
    fill: none;
    stroke: #999;
    stroke-width: 1.600;
}
.dev-path {
    margin-left: 8px;
    font-size: 14px;
    color: #bbb;
}
.dev-icon {
    width: 20px;
    height: 20px;
    margin-left: 11px;
    margin-right: 3px;
    fill: none;
    stroke: #8a8a8a;
    stroke-width: 1.500;
}

/* app layout */
.app {
    flex: 1;
    min-height: 0;
    display: flex;
    background: #fff;
    letter-spacing: -0.3px;
}
.sidebar {
    width: 288px;
    flex: none;
    border-right: 1px solid #e5e7eb;
}
.logo {
    height: 65px;
    display: flex;
    align-items: center;
    padding: 0 0 2px 24px;
}
.logo-icon {
    width: 32px;
    height: 32px;
    color: #4f46e5;
}
.nav {
    display: flex;
    flex-direction: column;
    gap: 4px;
    padding: 18px 16px 0;
}
.nav-item {
    height: 40px;
    display: flex;
    align-items: center;
    gap: 12px;
    padding: 0 8px;
    border-radius: 6px;
    font-size: 14px;
    font-weight: 500;
    color: #374151;
}
.nav-item.active {
    background: #f9fafb;
    color: #4f46e5;
}
.subnav {
    margin: 0 8px;
}

/* top bar */
.content {
    flex: 1;
    min-width: 0;
    display: flex;
    flex-direction: column;
}
.topbar {
    height: 65px;
    flex: none;
    display: flex;
    align-items: center;
    justify-content: flex-end;
    padding-right: 16px;
    border-bottom: 1px solid #e5e7eb;
}
.bell {
    color: #9ca3af;
    stroke-width: 1.500;
    margin-right: 14px;
}
.user {
    text-align: right;
    margin-right: 8px;
}
.user-name {
    font-size: 14px;
    line-height: 20px;
    font-weight: 500;
    color: #374151;
}
.user-role {
    margin-top: 1px;
    font-size: 12px;
    line-height: 16px;
    color: #6b7280;
}
.avatar {
    width: 32px;
    height: 32px;
    border-radius: 50%;
    background: #f3f4f6;
    display: flex;
    align-items: center;
    justify-content: center;
    font-size: 14px;
    font-weight: 500;
    color: #4b5563;
}

/* page */
.main {
    width: 1280px;
    margin: 0 auto;
    padding: 25px 32px 0;
}
.page-title {
    margin: 0 0 6px;
    display: flex;
    align-items: center;
    gap: 8px;
    font-size: 24px;
    line-height: 32px;
    font-weight: 600;
    letter-spacing: -0.8px;
}
.page-title .icon {
    color: #4f46e5;
}
.page-sub {
    margin: 0 0 32px;
    font-size: 14px;
    line-height: 20px;
    color: #4b5563;
    letter-spacing: -0.4px;
}
.card {
    background: #fff;
    border: 1px solid #f3f4f6;
    border-radius: 8px;
    box-shadow: 0 1px 2px rgba(0, 0, 0, 0.08);
}
.filter {
    height: 112px;
    padding: 23px;
    display: flex;
    align-items: flex-end;
    gap: 16px;
}
.field {
    display: flex;
    flex-direction: column;
    gap: 4px;
}
.field-plate {
    width: 280px;
}
.field-start {
    width: 379px;
}
.field label {
    font-size: 14px;
    line-height: 20px;
    font-weight: 500;
    color: #374151;
}
.input-box {
    height: 40px;
    display: flex;
    align-items: center;
    gap: 9px;
    padding: 0 14px 0 11px;
    border: 1px solid #d1d5db;
    border-radius: 6px;
    background: #fff;
    font-size: 14px;
}
.input-box .icon {
    width: 20px;
    height: 20px;
    color: #9ca3af;
    stroke-width: 1.500;
}
.input-box input {
    flex: 1;
    min-width: 0;
    border: none;
    outline: none;
    padding: 0;
    font: inherit;
    letter-spacing: -0.4px;
    color: #111827;
}
.input-box input::placeholder {
    color: #6b7280;
}
.date-value {
    flex: 1;
    margin-bottom: 1px;
    color: #111827;
}
.picker {
    width: 12px;
    height: 12px;
    flex: none;
}
.query-btn {
    width: 181px;
    height: 36px;
    display: flex;
    align-items: center;
    justify-content: center;
    gap: 8px;
    padding-bottom: 1px;
    border-radius: 4px;
    background: #4f46e5;
    color: #fff;
    font-size: 14px;
    font-weight: 600;
    letter-spacing: -0.4px;
}
.query-btn .icon {
    width: 18px;
    height: 18px;
    stroke-width: 1.800;
}

/* results table */
.table-card {
    margin-top: 31px;
    overflow: hidden;
}
.results {
    width: 100%;
    table-layout: fixed;
    border-collapse: collapse;
    font-size: 14px;
}
.c-date { width: 175px; }
.c-plate { width: 103px; }
.c-brand { width: 123px; }
.c-chassis { width: 179px; }
.c-motor { width: 154px; }
.c-mode { width: 116px; }
.c-km { width: 81px; }
.c-fee { width: 72px; }
.results th {
    height: 48px;
    padding: 0 12px;
    text-align: left;
    font-weight: 600;
    color: #111827;
    background: #f9fafb;
    border-bottom: 1px solid #e5e7eb;
    white-space: nowrap;
}
.results th.th-date {
    padding-left: 11px;
}
.sort {
    display: inline-flex;
    align-items: center;
    gap: 8px;
}
.sort .icon {
    width: 16px;
    height: 16px;
    stroke-width: 1.800;
}
.results td {
    height: 62px;
    padding: 0 12px;
    color: #6b7280;
    white-space: nowrap;
}
.results td.cell-date {
    padding-left: 23px;
    color: #111827;
    letter-spacing: -0.55px;
}
.results td.cell-plate {
    font-weight: 600;
    color: #111827;
    letter-spacing: -0.8px;
}
.results td.cell-code {
    letter-spacing: -0.85px;
}
.results td.cell-fee {
    font-weight: 600;
    color: #16a34a;
    letter-spacing: -1px;
}
.badge {
    display: inline-block;
    height: 24px;
    padding: 0 7px;
    border: 1px solid #c7d2fe;
    border-radius: 6px;
    background: #eef2ff;
    color: #4338ca;
    font-size: 12px;
    line-height: 22px;
    font-weight: 600;
    letter-spacing: 0;
    vertical-align: middle;
}
.row-actions {
    display: flex;
    justify-content: flex-end;
    gap: 7px;
    margin: 1px 11px 0 0;
}
.row-btn {
    height: 30px;
    display: flex;
    align-items: center;
    gap: 8px;
    padding: 0 10px;
    border: 1px solid #e5e7eb;
    border-radius: 6px;
    background: #fff;
    color: #374151;
    font-size: 12px;
    font-weight: 500;
    letter-spacing: -0.2px;
}
.row-btn .icon {
    width: 16px;
    height: 16px;
    stroke-width: 1.800;
}
.row-btn-focus {
    background: #f9fafb;
    outline: 2px solid #6366f1;
    outline-offset: 1.500px;
}

/* windows taskbar */
.taskbar {
    height: 48px;
    flex: none;
    display: flex;
    align-items: center;
    padding: 0 0 1px 18px;
    border-top: 1px solid #aebcae;
    background: linear-gradient(90deg, #d6e9cb 0, #cbe5e8 260px, #cde6cf 480px, #e1ecab 760px, #dbeaa9 1050px, #d3e8c3 1300px, #c9e6d0 1560px, #c4e4e6 1650px, #d0e2e9 1920px);
    font-family: "Open Sans", "Liberation Sans", sans-serif;
    color: #1a1a1a;
}
.weather {
    position: relative;
    width: 523px;
    flex: none;
    display: flex;
    align-items: center;
    gap: 9px;
}
.weather-icon {
    width: 24px;
    height: 24px;
    flex: none;
}
.weather-badge {
    position: absolute;
    left: 12px;
    top: -7px;
    width: 16px;
    height: 16px;
    border-radius: 50%;
    background: #c42b1c;
    color: #fff;
    font-size: 10px;
    line-height: 16px;
    text-align: center;
}
.weather-text {
    font-size: 11px;
    line-height: 16px;
}
.weather-desc {
    color: #444;
}
.task-icon {
    position: relative;
    width: 44px;
    height: 38px;
    flex: none;
    display: flex;
    align-items: center;
    justify-content: center;
}
.task-icon svg {
    width: 24px;
    height: 24px;
}
.task-icon.has-dot::after {
    content: "";
    position: absolute;
    left: 19px;
    bottom: 0;
    width: 6px;
    height: 3px;
    border-radius: 2px;
    background: #7a7a7a;
}
.task-active {
    background: rgba(255, 255, 255, 0.55);
    border-radius: 4px;
    width: 38px;
    margin-left: 3px;
}
.task-active::after {
    content: "";
    position: absolute;
    left: 11px;
    bottom: 0;
    width: 16px;
    height: 3px;
    border-radius: 2px;
    background: #00b4c8;
}
.chrome-s {
    position: absolute;
    right: 7px;
    top: 5px;
    width: 12px;
    height: 12px;
    border-radius: 50%;
    background: #b8401f;
}
.chrome-p {
    position: absolute;
    right: 2px;
    top: 2px;
    width: 15px;
    height: 15px;
    border-radius: 50%;
    background: #000;
}
.search-pill {
    width: 217px;
    height: 31px;
    flex: none;
    margin: 0 3px;
    display: flex;
    align-items: center;
    gap: 9px;
    padding: 0 5px 0 9px;
    border-radius: 16px;
    background: #f2f7e0;
    box-shadow: 0 1px 1px rgba(0, 0, 0, 0.2);
    font-size: 13px;
    color: #555;
}
.search-pill .icon {
    width: 20px;
    height: 20px;
    color: #1a1a1a;
}
.cranes {
    width: 36px;
    height: 28px;
    margin-left: auto;
}
.app-tile {
    width: 22px;
    height: 22px;
    border-radius: 4px;
    display: flex;
    align-items: center;
    justify-content: center;
    font-size: 12px;
    font-weight: 700;
}
.tile-adobe {
    background: #00005b;
    color: #9999ff;
}
.tile-ps {
    background: #001e36;
    color: #31a8ff;
}
.tray {
    margin-left: auto;
    display: flex;
    align-items: center;
    gap: 8px;
    padding-right: 18px;
}
.tray-group {
    display: flex;
}
.tray-icon {
    width: 24px;
    height: 24px;
    padding: 3px;
    fill: none;
    stroke: #1a1a1a;
    stroke-width: 1.500;
}
.tray-send {
    stroke: #1b7a8c;
}
.clock {
    margin-left: 6px;
    text-align: right;
    font-size: 11px;
    line-height: 16px;
    color: #1a1a1a;
}
.tray-bell {
    width: 20px;
    height: 20px;
    margin-left: -3px;
    fill: #0f6b6b;
}
```
